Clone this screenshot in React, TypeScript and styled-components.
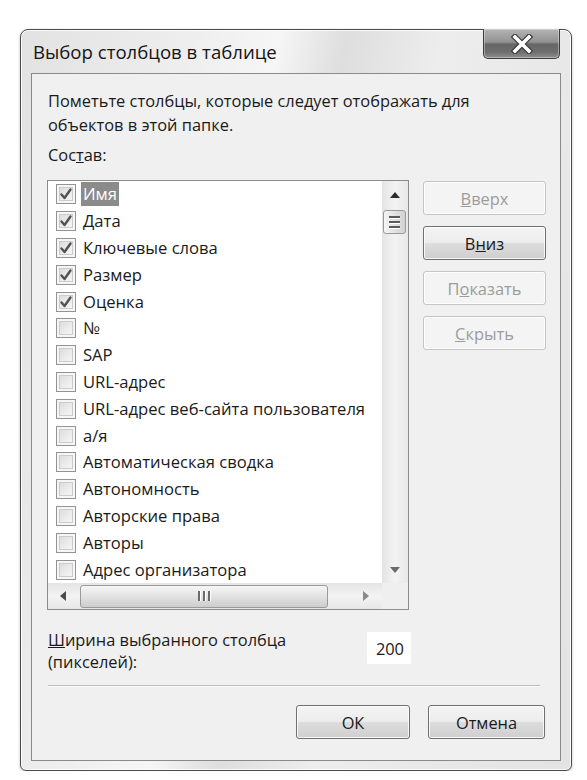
import React from "react";
import styled, { createGlobalStyle } from "styled-components";

const Global = createGlobalStyle`
  html, body { margin: 0; padding: 0; background: #ffffff; }
  body { font-family: "Open Sans", "Noto Sans", "DejaVu Sans", sans-serif; color: #1a1a1a; }
  * { box-sizing: border-box; }
`;

const Window = styled.div`
  margin: 29px 0 0 20px;
  width: 552px;
  height: 742px;
  border: 1px solid #4a4a4a;
  border-radius: 8px 8px 6px 6px;
  background: linear-gradient(100deg, #e2e2e2 0%, #eeeeee 25%, #f6f6f6 38%, #dedede 48%, #ededed 62%, #e3e3e3 100%);
  box-shadow: inset 0 0 0 1px rgba(255, 255, 255, 0.85), 0 1px 3px rgba(0, 0, 0, 0.25);
  padding: 0 10px 9px 10px;
  display: flex;
  flex-direction: column;
`;

const TitleBar = styled.div`
  height: 43px;
  display: flex;
  justify-content: space-between;
  align-items: center;
`;

const TitleText = styled.div`
  font-size: 18.6px;
  padding-left: 2px;
  color: #151515;
`;

const CloseButton = styled.div`
  align-self: flex-start;
  margin-top: -1px;
  margin-right: 1px;
  width: 77px;
  height: 30px;
  border: 1px solid #3c3c3c;
  border-top: none;
  border-radius: 0 0 5px 5px;
  background: linear-gradient(#b4b4b4 0%, #929292 45%, #666666 52%, #6e6e6e 80%, #909090 100%);
  box-shadow: inset 0 0 0 1px rgba(255, 255, 255, 0.35);
  display: flex;
  align-items: center;
  justify-content: center;
`;

const Client = styled.div`
  flex: 1;
  border: 1px solid #8a8a8a;
  background: #f0f0f0;
  padding: 15px 0 0 15px;
  display: flex;
  flex-direction: column;
  font-size: 16.4px;
`;

const Para = styled.div`
  line-height: 24px;
  padding-left: 1px;
`;

const Caption = styled.div`
  line-height: 24px;
  margin-top: 6px;
  padding-left: 1px;
`;

const ListRow = styled.div`
  margin-top: 13px;
  display: flex;
  gap: 14px;
  height: 430px;
`;

const ListBox = styled.div`
  width: 362px;
  height: 430px;
  border: 1px solid #8c8c8c;
  background: #ffffff;
  display: grid;
  grid-template-columns: 334px 26px;
  grid-template-rows: 402px 26px;
`;

const Items = styled.div`
  overflow: hidden;
  display: flex;
  flex-direction: column;
  font-size: 16.6px;
`;

const Row = styled.div`
  height: 26.8px;
  flex: none;
  display: flex;
  align-items: center;
  padding-left: 8px;
  gap: 5px;
  white-space: nowrap;
`;

const Box = styled.div`
  width: 20px;
  height: 20px;
  flex: none;
  border: 1px solid #939393;
  background: linear-gradient(135deg, #d6d6d6 0%, #ececec 55%, #fafafa 100%);
  box-shadow: inset 0 0 0 2px #f6f6f6, inset 0 0 0 3px #cbcbcb;
  display: flex;
  align-items: center;
  justify-content: center;
`;

const Label = styled.span<{ $selected?: boolean }>`
  height: 24px;
  line-height: 24px;
  padding: 0 2px;
  background: ${(p) => (p.$selected ? "#8b8b8b" : "transparent")};
  color: ${(p) => (p.$selected ? "#ffffff" : "#1a1a1a")};
`;

const VScroll = styled.div`
  background: linear-gradient(to right, #e4e4e4, #f3f3f3 50%, #e8e8e8);
  display: flex;
  flex-direction: column;
  align-items: center;
`;

const HScroll = styled.div`
  background: linear-gradient(#e4e4e4, #f3f3f3 50%, #e8e8e8);
  display: flex;
  align-items: center;
`;

const Corner = styled.div`
  background: #efefef;
`;

const ArrowCell = styled.div<{ $w: number; $h: number }>`
  width: ${(p) => p.$w}px;
  height: ${(p) => p.$h}px;
  flex: none;
  display: flex;
  align-items: center;
  justify-content: center;
`;

const Tri = styled.div<{ $dir: "up" | "down" | "left" | "right" }>`
  width: 0;
  height: 0;
  ${(p) =>
    p.$dir === "up"
      ? "border-left: 5px solid transparent; border-right: 5px solid transparent; border-bottom: 6px solid #2e2e2e;"
      : p.$dir === "down"
      ? "border-left: 5px solid transparent; border-right: 5px solid transparent; border-top: 6px solid #6a6a6a;"
      : p.$dir === "left"
      ? "border-top: 5px solid transparent; border-bottom: 5px solid transparent; border-right: 6px solid #4a4a4a;"
      : "border-top: 5px solid transparent; border-bottom: 5px solid transparent; border-left: 6px solid #8a8a8a;"}
`;

const VThumb = styled.div`
  width: 23px;
  height: 24px;
  margin-top: 2px;
  margin-right: 2px;
  border: 1px solid #9a9a9a;
  border-radius: 3px;
  background: linear-gradient(to right, #f6f6f6, #e2e2e2 50%, #d2d2d2);
  display: flex;
  flex-direction: column;
  align-items: center;
  justify-content: center;
  gap: 3px;
`;

const GripH = styled.div`
  width: 11px;
  height: 2px;
  background: #5a5a5a;
  box-shadow: 0 1px 0 #ffffff;
`;

const HThumb = styled.div`
  width: 248px;
  height: 23px;
  margin-left: 2px;
  border: 1px solid #9a9a9a;
  border-radius: 3px;
  background: linear-gradient(#f6f6f6, #e2e2e2 50%, #cdcdcd);
  display: flex;
  align-items: center;
  justify-content: center;
  gap: 3px;
`;

const GripV = styled.div`
  width: 2px;
  height: 10px;
  background: #6a6a6a;
  box-shadow: 1px 0 0 #ffffff;
`;

const Spacer = styled.div`
  flex: 1;
`;

const SideButtons = styled.div`
  display: flex;
  flex-direction: column;
  gap: 11px;
  padding-top: 1px;
`;

const Button = styled.div<{ $disabled?: boolean; $w?: number }>`
  width: ${(p) => p.$w ?? 123}px;
  height: 34px;
  border-radius: 3px;
  display: flex;
  align-items: center;
  justify-content: center;
  font-size: 16.4px;
  border: 1px solid ${(p) => (p.$disabled ? "#c4c4c4" : "#6f6f6f")};
  color: ${(p) => (p.$disabled ? "#9c9c9c" : "#1a1a1a")};
  background: ${(p) =>
    p.$disabled
      ? "#f4f4f4"
      : "linear-gradient(#f4f4f4 0%, #ececec 48%, #dcdcdc 52%, #cfcfcf 100%)"};
  box-shadow: inset 0 0 0 1px rgba(255, 255, 255, 0.8);
`;

const WidthRow = styled.div`
  margin-top: 19px;
  width: 364px;
  display: flex;
  justify-content: space-between;
  align-items: flex-start;
`;

const WidthLabel = styled.div`
  line-height: 22px;
  padding-left: 1px;
`;

const NumberBox = styled.div`
  margin-top: 3px;
  width: 44px;
  height: 32px;
  background: #ffffff;
  display: flex;
  align-items: center;
  justify-content: flex-end;
  padding-right: 7px;
`;

const Separator = styled.div`
  margin: 12px 20px 0 1px;
  height: 2px;
  border-top: 1px solid #bcbcbc;
  border-bottom: 1px solid #fbfbfb;
`;

const FooterButtons = styled.div`
  margin-top: 18px;
  display: flex;
  justify-content: flex-end;
  gap: 18px;
  padding-right: 15px;
`;

const items: { name: string; checked: boolean; selected?: boolean }[] = [
  { name: "Имя", checked: true, selected: true },
  { name: "Дата", checked: true },
  { name: "Ключевые слова", checked: true },
  { name: "Размер", checked: true },
  { name: "Оценка", checked: true },
  { name: "№", checked: false },
  { name: "SAP", checked: false },
  { name: "URL-адрес", checked: false },
  { name: "URL-адрес веб-сайта пользователя", checked: false },
  { name: "а/я", checked: false },
  { name: "Автоматическая сводка", checked: false },
  { name: "Автономность", checked: false },
  { name: "Авторские права", checked: false },
  { name: "Авторы", checked: false },
  { name: "Адрес организатора", checked: false },
];

const Check = () => (
  <svg width="14" height="14" viewBox="0 0 14 14">
    <path d="M2.5 7.5 L5.5 11 L11.5 2.5" fill="none" stroke="#525252" strokeWidth="2.4" strokeLinecap="round" strokeLinejoin="round" />
  </svg>
);

const CloseX = () => (
  <svg width="26" height="20" viewBox="0 0 26 20">
    <path d="M6 3 L20 17 M20 3 L6 17" stroke="#3a3a3a" strokeWidth="6" strokeLinecap="square" />
    <path d="M6 3 L20 17 M20 3 L6 17" stroke="#ffffff" strokeWidth="3.6" strokeLinecap="square" />
  </svg>
);

export default function App() {
  return (
    <>
      <Global />
      <Window>
        <TitleBar>
          <TitleText>Выбор столбцов в таблице</TitleText>
          <CloseButton>
            <CloseX />
          </CloseButton>
        </TitleBar>
        <Client>
          <Para>
            Пометьте столбцы, которые следует отображать для
            <br />
            объектов в этой папке.
          </Para>
          <Caption>
            Сос<u>т</u>ав:
          </Caption>
          <ListRow>
            <ListBox>
              <Items>
                {items.map((it) => (
                  <Row key={it.name}>
                    <Box>{it.checked && <Check />}</Box>
                    <Label $selected={it.selected}>{it.name}</Label>
                  </Row>
                ))}
              </Items>
              <VScroll>
                <ArrowCell $w={26} $h={27}>
                  <Tri $dir="up" />
                </ArrowCell>
                <VThumb>
                  <GripH />
                  <GripH />
                  <GripH />
                </VThumb>
                <Spacer />
                <ArrowCell $w={26} $h={27}>
                  <Tri $dir="down" />
                </ArrowCell>
              </VScroll>
              <HScroll>
                <ArrowCell $w={30} $h={26}>
                  <Tri $dir="left" />
                </ArrowCell>
                <HThumb>
                  <GripV />
                  <GripV />
                  <GripV />
                </HThumb>
                <Spacer />
                <ArrowCell $w={32} $h={26}>
                  <Tri $dir="right" />
                </ArrowCell>
              </HScroll>
              <Corner />
            </ListBox>
            <SideButtons>
              <Button $disabled>
                <span>
                  <u>В</u>верх
                </span>
              </Button>
              <Button>
                <span>
                  В<u>н</u>из
                </span>
              </Button>
              <Button $disabled>
                <span>
                  П<u>о</u>казать
                </span>
              </Button>
              <Button $disabled>
                <span>
                  <u>С</u>крыть
                </span>
              </Button>
            </SideButtons>
          </ListRow>
          <WidthRow>
            <WidthLabel>
              <u>Ш</u>ирина выбранного столбца
              <br />
              (пикселей):
            </WidthLabel>
            <NumberBox>200</NumberBox>
          </WidthRow>
          <Separator />
          <FooterButtons>
            <Button $w={114}>ОК</Button>
            <Button $w={117}>Отмена</Button>
          </FooterButtons>
        </Client>
      </Window>
    </>
  );
}
